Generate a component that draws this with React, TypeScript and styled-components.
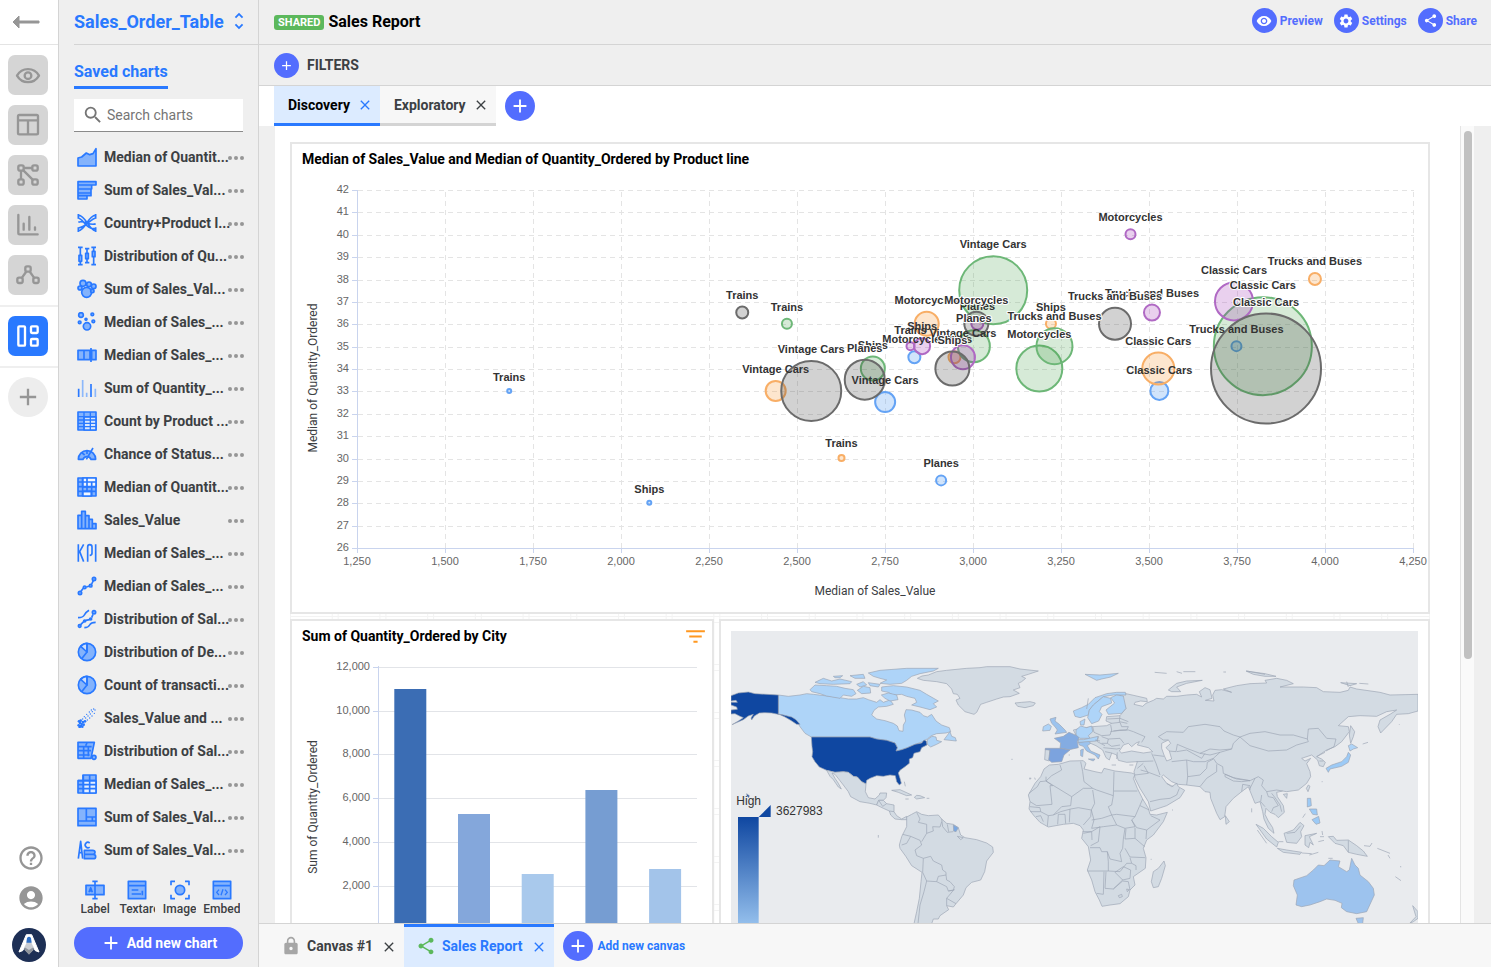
import React from "react";
import styled, { createGlobalStyle, css } from "styled-components";
import {
  MdAccountCircle,
  MdAdd,
  MdClose,
  MdFilterList,
  MdHelpOutline,
  MdLock,
  MdSearch,
  MdSettings,
  MdShare,
  MdUnfoldMore,
  MdVisibility,
} from "react-icons/md";

const BLUE = "#2979ff";
const INDIGO = "#536dfe";
const LINE = "#d4d4d4";
const PANEL = "#efefef";
const CHART_FONT = '"Liberation Sans", Arial, sans-serif';
const UI_FONT = 'Roboto, "Liberation Sans", sans-serif';

const GlobalStyle = createGlobalStyle`
  *, *::before, *::after { box-sizing: border-box; }
  body { margin: 0; font-family: ${UI_FONT}; color: #3c4043; background: #fff; }
  button, input { font-family: inherit; }
  button { border: 0; padding: 0; background: none; color: inherit; cursor: pointer; }
  ul { list-style: none; margin: 0; padding: 0; }
  h1, h2 { margin: 0; }
  svg { display: block; flex: none; }
`;

/* ---------- Layout ---------- */

const Shell = styled.div`
  display: flex;
  height: 100vh;
  overflow: hidden;
`;

const Rail = styled.nav`
  flex: none;
  width: 59px;
  border-right: 1px solid ${LINE};
  display: flex;
  flex-direction: column;
  background: #fff;
`;

const BackButton = styled.button`
  height: 45px;
  border-bottom: 1px solid #e4e4e4;
  padding-left: 12px;
`;

const RailGroup = styled.div<{ $lined?: boolean }>`
  display: flex;
  flex-direction: column;
  gap: 10px;
  padding: 10px 0 10px 8px;
  ${(p) =>
    p.$lined &&
    css`
      padding: 9px 0 10px 8px;
      border-top: 2px solid ${PANEL};
      border-bottom: 2px solid ${PANEL};
    `}
`;

const RailButton = styled.button<{ $active?: boolean }>`
  width: 40px;
  height: 40px;
  border-radius: 7px;
  background: ${(p) => (p.$active ? BLUE : "#d5d5d5")};
  color: ${(p) => (p.$active ? "#fff" : "#969696")};
`;

const RailAdd = styled.button`
  display: grid;
  place-items: center;
  width: 40px;
  height: 40px;
  margin: 9px 0 0 8px;
  border-radius: 50%;
  background: #ededed;
  color: #969696;
`;

const RailFooter = styled.div`
  margin-top: auto;
  padding: 0 0 5px 12px;
  color: #969696;
`;

const RailLinks = styled.div`
  display: flex;
  flex-direction: column;
  gap: 12px;
  padding: 0 0 16px 5px;
`;

const Sidebar = styled.aside`
  flex: none;
  width: 200px;
  border-right: 1px solid ${LINE};
  background: ${PANEL};
  display: flex;
  flex-direction: column;
  padding-left: 15px;
`;

const TablePicker = styled.button`
  flex: none;
  height: 45px;
  border-bottom: 1px solid ${LINE};
  display: flex;
  align-items: center;
  justify-content: space-between;
  padding: 0 8px 2px 0;
  color: ${BLUE};
  font-size: 18px;
  font-weight: 700;
`;

const SidebarTab = styled.h2`
  flex: none;
  align-self: flex-start;
  height: 44px;
  padding-top: 16px;
  border-bottom: 3px solid ${BLUE};
  color: ${BLUE};
  font-size: 16px;
  line-height: 22px;
  font-weight: 700;
`;

const SearchBox = styled.label`
  flex: none;
  display: flex;
  align-items: center;
  gap: 3px;
  height: 33px;
  margin: 10px 15px 8px 0;
  padding-left: 8px;
  background: #fff;
  border-bottom: 1px solid #8a8a8a;
  color: #757575;
  input {
    border: 0;
    outline: 0;
    width: 120px;
    padding: 0;
    background: none;
    font-size: 14px;
    color: #3c4043;
  }
  input::placeholder {
    color: #757575;
    opacity: 1;
  }
`;

const ChartRow = styled.li`
  display: flex;
  align-items: center;
  height: 33px;
  padding: 0 14px 0 3px;
`;

const ChartLink = styled.button`
  display: flex;
  align-items: center;
  gap: 7px;
  flex: 1;
  min-width: 0;
  white-space: nowrap;
  font-size: 14px;
  line-height: 20px;
  font-weight: 700;
  text-align: left;
`;

const MoreButton = styled.button`
  flex: none;
  color: #969696;
`;

const SidebarFooter = styled.div`
  margin-top: auto;
  padding: 0 15px 8px 0;
`;

const ToolGrid = styled.div`
  display: grid;
  grid-template-columns: repeat(4, 1fr);
  justify-items: center;
  margin-bottom: 10px;
`;

const ToolButton = styled.button`
  display: flex;
  flex-direction: column;
  align-items: center;
  gap: 1px;
  font-size: 12px;
  line-height: 16px;
  font-weight: 500;
`;

const ToolLabel = styled.span<{ $clip?: boolean }>`
  overflow: hidden;
  ${(p) => p.$clip && "width: 36px; text-align: left;"}
`;

const AddChart = styled.button`
  display: flex;
  align-items: center;
  justify-content: center;
  gap: 5px;
  width: 100%;
  height: 32px;
  border-radius: 16px;
  background: ${INDIGO};
  color: #fff;
  font-size: 14px;
  font-weight: 700;
`;

const Main = styled.main`
  flex: 1;
  min-width: 0;
  display: flex;
  flex-direction: column;
`;

const Bar = styled.header<{ $height: number }>`
  flex: none;
  display: flex;
  align-items: center;
  height: ${(p) => p.$height}px;
  padding: 0 14px 0 15px;
  background: ${PANEL};
  border-bottom: 1px solid ${LINE};
`;

const Badge = styled.span`
  height: 15px;
  padding: 0 4px;
  margin-right: 4px;
  border-radius: 3px;
  background: #5cb85c;
  color: #fff;
  font-size: 11px;
  line-height: 15px;
  font-weight: 700;
`;

const ReportTitle = styled.h1`
  font-size: 16px;
  line-height: 20px;
  font-weight: 700;
  color: #000;
`;

const Actions = styled.div`
  margin-left: auto;
  display: flex;
  gap: 11px;
  padding-bottom: 3px;
`;

const ActionButton = styled.button`
  display: flex;
  align-items: center;
  gap: 3px;
  color: ${INDIGO};
  font-size: 12px;
  font-weight: 700;
`;

const Disc = styled.span<{ $size: number }>`
  display: grid;
  place-items: center;
  flex: none;
  width: ${(p) => p.$size}px;
  height: ${(p) => p.$size}px;
  border-radius: 50%;
  background: ${INDIGO};
  color: #fff;
`;

const FilterButton = styled.button`
  display: flex;
  align-items: center;
  gap: 8px;
  font-size: 14px;
  font-weight: 700;
`;

const TabStrip = styled.div`
  flex: none;
  display: flex;
  height: 40px;
  padding-left: 15px;
`;

const SubTab = styled.div<{ $active?: boolean }>`
  display: flex;
  align-items: center;
  gap: 7px;
  padding: 1px 7px 0 14px;
  background: ${(p) => (p.$active ? "#dcebff" : "#f7f7f7")};
  border-bottom: 3px solid ${(p) => (p.$active ? BLUE : LINE)};
  color: ${(p) => (p.$active ? "#000" : "#3c4043")};
  button:last-child {
    color: ${(p) => (p.$active ? BLUE : "#3c4043")};
  }
`;

const TabButton = styled.button`
  font-size: 14px;
  font-weight: 700;
`;

const AddTab = styled.button`
  margin: 5px 0 0 9px;
  align-self: flex-start;
`;

const Viewport = styled.div`
  flex: 1;
  min-height: 0;
  overflow: hidden;
  display: flex;
  background: ${PANEL};
  padding: 0 17px 0 16px;
`;

const Page = styled.div`
  flex: 1;
  min-width: 0;
  padding: 16px 30px 0 15px;
  background: #fff;
  overflow: hidden;
`;

const Track = styled.div`
  flex: none;
  width: 14px;
  padding: 5px 2px 0 3px;
  background: #fafafa;
  border-left: 1px solid #e4e4e4;
`;

const Thumb = styled.div`
  height: 528px;
  border-radius: 4px;
  background: #c1c1c1;
`;

const Grid = styled.div`
  --cell: calc((100% + 5px) / 24);
  display: grid;
  grid-template-columns: 424fr 711fr;
  gap: 5px;
  background-image: linear-gradient(to right, #f3f3f3 0 1px, transparent 1px 42px, #f3f3f3 42px 43px, transparent 43px),
    linear-gradient(to bottom, #f3f3f3 0 1px, transparent 1px 42px, #f3f3f3 42px 43px, transparent 43px);
  background-size: var(--cell) 48px, 48px 48px;
`;

const Card = styled.section<{ $wide?: boolean; $inset?: boolean }>`
  ${(p) => p.$wide && "grid-column: 1 / -1;"}
  ${(p) => p.$inset && "padding: 10px 10px 0;"}
  border: 2px solid #e6e6e6;
  background: #fff;
  overflow: hidden;
  > svg {
    width: 100%;
    height: auto;
  }
`;

const CardHead = styled.div`
  display: flex;
  align-items: center;
  justify-content: space-between;
  height: 30px;
  padding: 0 4px 0 10px;
  h2 {
    font-size: 14px;
    line-height: 20px;
    font-weight: 700;
    color: #000;
  }
  button {
    color: #ff9820;
  }
`;

const CanvasBar = styled.footer`
  flex: none;
  display: flex;
  height: 44px;
  padding-left: 10px;
  background: #f7f7f7;
  border-top: 1px solid ${LINE};
`;

const CanvasTab = styled.div<{ $active?: boolean }>`
  display: flex;
  align-items: center;
  gap: 6px;
  padding: 0 7px 2px 12px;
  border-top: 3px solid ${(p) => (p.$active ? BLUE : "transparent")};
  background: ${(p) => (p.$active ? "#dcebff" : "transparent")};
  color: ${(p) => (p.$active ? BLUE : "#3c4043")};
  button:last-child {
    padding: 2px 0 0 2px;
  }
`;

const AddCanvas = styled.button`
  display: flex;
  align-items: center;
  gap: 5px;
  margin-left: 9px;
  color: ${BLUE};
  font-size: 12px;
  font-weight: 700;
`;

/* ---------- Rail icons ---------- */

const RailSvg = styled.svg`
  width: 40px;
  height: 40px;
  fill: none;
  stroke: currentColor;
  stroke-width: 7;
  stroke-linecap: round;
  stroke-linejoin: round;
`;

const railIcons: { label: string; art: React.ReactNode }[] = [
  {
    label: "View",
    art: (
      <>
        <path d="M27 62C42 36 78 36 93 62C78 88 42 88 27 62Z" />
        <circle cx="60" cy="62" r="10" />
      </>
    ),
  },
  { label: "Table", art: <path d="M34 30H86Q90 30 90 34V84Q90 88 86 88H34Q30 88 30 84V34Q30 30 34 30ZM30 46H90M60 46V88" /> },
  {
    label: "Model",
    art: (
      <>
        <path d="M48 39H72M39 48V72M46 46L74 74" />
        {[[39, 39], [81, 39], [39, 81], [81, 81]].map(([x, y]) => (
          <rect key={`${x}-${y}`} x={x - 8} y={y - 8} width="16" height="16" rx="5" />
        ))}
      </>
    ),
  },
  { label: "Charts", art: <path d="M31 30V84Q31 88 35 88H89M47 56V74M64 36V74M81 67V74" /> },
  {
    label: "Relations",
    art: (
      <>
        <path d="M54 51L42 68M66 51L78 68" />
        {[[60, 42], [36, 76], [84, 76]].map(([x, y]) => (
          <rect key={x} x={x - 8} y={y - 8} width="16" height="16" rx="5" />
        ))}
      </>
    ),
  },
];

/* ---------- Saved chart icons ---------- */

const ChartSvg = styled.svg`
  width: 20px;
  height: 20px;
  fill: #84b3fc;
  stroke: ${BLUE};
  stroke-width: 5;
  stroke-linejoin: round;
  .line {
    fill: none;
  }
  .solid {
    fill: ${BLUE};
    stroke: none;
  }
  .thin {
    stroke-width: 4;
  }
`;

const art: Record<string, React.ReactNode> = {
  area: <path d="M3 57V33L14 30L28 18L38 23L48 20L57 5V57Z" />,
  hbars: <path d="M3 5H57V15H3ZM3 15H44V27H3ZM3 27H42V39H3ZM3 39H42V47H3ZM3 47H30V57H3Z" />,
  sankey: <path className="line" d="M4 3V17M4 43V57M56 3V17M56 43V57M4 6C28 9 34 50 56 54M4 15C20 18 28 52 56 46M4 54C26 50 32 9 56 6M4 45C28 42 40 18 56 15M4 28C18 20 40 40 56 32" />,
  boxplot: (
    <>
      <path className="line" d="M3 4H17M10 4V56M3 56H17M24 8H37M30 8V50M24 50H37M43 4H57M50 4V56M43 56H57" />
      <path d="M6 28H14V46H6ZM26 22H34V38H26ZM46 16H54V32H46Z" />
    </>
  ),
  cluster: (
    <>
      <circle cx="18" cy="13" r="9" />
      <circle cx="36" cy="16" r="7" />
      <circle cx="50" cy="22" r="7" />
      <circle cx="9" cy="27" r="6" />
      <circle cx="29" cy="40" r="15" />
      <circle cx="46" cy="36" r="5" />
    </>
  ),
  bubbles: (
    <>
      <circle cx="12" cy="9" r="7" />
      <circle cx="46" cy="7" r="4" />
      <circle cx="27" cy="22" r="3" />
      <circle cx="8" cy="31" r="4" />
      <circle cx="49" cy="28" r="4" />
      <circle cx="30" cy="43" r="11" />
    </>
  ),
  hbox: <path d="M3 16H21V44H3ZM21 16H39V44H21ZM44 16H57V44H44ZM42 9V51" />,
  bars: (
    <>
      <path d="M5 32V57M42 18V57" />
      <path d="M17 6V57M29 44V57M55 32V57" stroke="#8cb8fb" />
    </>
  ),
  table: (
    <>
      <path d="M3 3H57V57H3Z" />
      <path d="M21 18H57V57H21Z" fill="#d8e7fd" />
      <path className="line thin" d="M3 17H57M3 27H57M3 37H57M3 47H57M21 3V57M40 3V57" />
    </>
  ),
  gauge: (
    <>
      <path d="M4 46A26 26 0 0 1 56 46H42A13 13 0 0 0 18 46Z" />
      <path className="line" d="M28 46L48 12M14 26L23 33M30 19V30" />
    </>
  ),
  pivot: (
    <>
      <path d="M3 3H57V57H3Z" />
      <path d="M17 3H57V30H17ZM17 43H43V57H17Z" fill="#f2f7ff" />
      <path className="line" d="M3 15H57M3 29H57M3 43H57M17 3V57M30 3V43M44 15V57" />
    </>
  ),
  histogram: <path d="M3 16H14V56H3ZM14 4H25V56H14ZM25 17H36V56H25ZM36 28H46V56H36ZM46 41H57V56H46Z" />,
  kpi: <path className="line" d="M4 4V56M20 4L8 26L20 56M32 56V12Q32 5 38 5Q45 5 45 12V30Q45 37 38 37M56 4V56" />,
  line: (
    <>
      <path className="line" d="M12 46L20 35M28 33L38 30M44 24L49 14" />
      <circle cx="9" cy="51" r="5" />
      <circle cx="23" cy="34" r="4" />
      <circle cx="41" cy="29" r="4" />
      <circle cx="51" cy="9" r="5" />
    </>
  ),
  multiline: (
    <>
      <path className="line" d="M11 47L20 38M26 34L38 32M44 26L48 16M3 26Q18 26 22 18T36 4M22 56Q34 56 38 48T56 40" />
      <circle cx="8" cy="51" r="4" />
      <circle cx="23" cy="36" r="3" />
      <circle cx="41" cy="30" r="3" />
      <circle cx="51" cy="10" r="5" />
    </>
  ),
  pie: (
    <>
      <circle cx="30" cy="30" r="26" />
      <path d="M30 30V4A26 26 0 0 0 11 13Z" fill="#cfe0fb" />
      <path className="line" d="M30 4V30L14 50" />
    </>
  ),
  scatter: (
    <>
      {[
        [5, 52], [9, 45], [12, 54], [6, 40], [14, 48], [18, 42], [11, 38], [20, 50], [17, 33], [24, 40], [26, 30],
        [22, 26], [31, 36], [33, 24], [29, 19], [38, 30], [40, 18], [37, 12], [45, 24], [46, 11], [43, 6], [52, 16],
        [54, 6], [50, 3], [8, 57], [16, 56],
      ].map(([x, y]) => (
        <circle key={`${x}-${y}`} className="solid" cx={x} cy={y} r={y > 37 ? 4 : 2} />
      ))}
    </>
  ),
  predict: (
    <>
      <path d="M3 4H52L42 52H3Z" />
      <path className="line" d="M3 17H44M3 29H42M3 42H38M20 17V52M34 17V46M26 14L30 6" />
      <circle cx="51" cy="49" r="6" />
    </>
  ),
  summary: (
    <>
      <path d="M18 3H57V57H3V20H18Z" />
      <path d="M19 20H57V57H19Z" fill="#e6f0ff" />
      <path className="line" d="M3 20H57M3 32H57M3 44H57M19 3V57M38 3V57" />
    </>
  ),
  treemap: <path d="M3 4H28V42H3ZM28 4H57V30H28ZM28 30H46V42H28ZM46 30H57V42H46ZM3 42H57V56H3Z" />,
  wordcloud: (
    <>
      <path className="line" d="M4 56L11 4L17 56M7 38H15M38 9A8 8 0 1 0 38 21" />
      <path d="M22 31H47Q54 31 54 37Q54 43 47 43H22ZM22 43H49Q56 43 56 50Q56 56 49 56H22Z" />
    </>
  ),
  label: (
    <>
      <path d="M3 16H57V44H3Z" />
      <path className="line" d="M30 4V56M22 4H38M22 56H38M12 37L17 23L22 37M14 33H20" />
    </>
  ),
  textarea: (
    <>
      <path d="M4 4H56V56H4ZM4 17H56" />
      <path className="line" d="M14 30H34M14 42H42M46 32V46" />
    </>
  ),
  image: (
    <>
      <path className="line" d="M3 16V4H15M45 4H57V16M57 44V56H45M15 56H3V44" />
      <circle cx="30" cy="30" r="14" />
    </>
  ),
  embed: (
    <>
      <path d="M4 4H56V56H4ZM4 17H56" />
      <path className="line thin" d="M21 29L14 37L21 45M39 29L46 37L39 45M33 28L27 46" />
    </>
  ),
};

const ChartIcon = ({ kind }: { kind: string }) => (
  <ChartSvg viewBox="0 0 60 60" aria-hidden="true">
    {art[kind]}
  </ChartSvg>
);

const savedCharts: [string, string][] = [
  ["area", "Median of Quantit..."],
  ["hbars", "Sum of Sales_Val..."],
  ["sankey", "Country+Product l..."],
  ["boxplot", "Distribution of Qu..."],
  ["cluster", "Sum of Sales_Val..."],
  ["bubbles", "Median of Sales_..."],
  ["hbox", "Median of Sales_..."],
  ["bars", "Sum of Quantity_..."],
  ["table", "Count by Product ..."],
  ["gauge", "Chance of Status..."],
  ["pivot", "Median of Quantit..."],
  ["histogram", "Sales_Value"],
  ["kpi", "Median of Sales_..."],
  ["line", "Median of Sales_..."],
  ["multiline", "Distribution of Sal..."],
  ["pie", "Distribution of De..."],
  ["pie", "Count of transacti..."],
  ["scatter", "Sales_Value and ..."],
  ["predict", "Distribution of Sal..."],
  ["summary", "Median of Sales_..."],
  ["treemap", "Sum of Sales_Val..."],
  ["wordcloud", "Sum of Sales_Val..."],
];

/* ---------- Bubble chart ---------- */

type Point = [label: string, x: number, y: number, r: number];

const T = "Trains";
const S = "Ships";
const P = "Planes";
const M = "Motorcycles";
const V = "Vintage Cars";
const C = "Classic Cars";
const B = "Trucks and Buses";

const series: { color: string; fill: string; halo: boolean; points: Point[] }[] = [
  {
    color: "#64a3f5",
    fill: "#2f86ee",
    halo: false,
    points: [[T, 1681, 33, 2], [S, 2079, 28, 2], [P, 2908, 29, 5], [V, 2749, 32.5, 10], [M, 2832, 34.5, 6], [C, 3528, 33, 9], [B, 3747, 35, 5]],
  },
  {
    color: "#f8ae66",
    fill: "#f78c1f",
    halo: false,
    points: [[T, 2625, 30, 3], [S, 3220, 36, 5], [P, 2946, 34.5, 6], [V, 2438, 33, 10], [M, 2867, 36, 12], [C, 3525, 34, 16], [B, 3970, 38, 6]],
  },
  {
    color: "#6db777",
    fill: "#43a047",
    halo: true,
    points: [[T, 2470, 36, 5], [S, 2714, 34, 12], [P, 3001, 35, 16], [V, 3056, 37.5, 34], [M, 3187, 34, 23], [C, 3822, 35, 49], [B, 3230, 35, 18]],
  },
  {
    color: "#b069c4",
    fill: "#9c27b0",
    halo: false,
    points: [[T, 2821, 35, 4], [S, 2854, 35, 8], [P, 3011, 36, 6], [V, 2970, 34.5, 12], [M, 3446, 40, 5], [C, 3740, 37, 19], [B, 3507, 36.5, 8]],
  },
  {
    color: "#6b6b6b",
    fill: "#333",
    halo: true,
    points: [[T, 2343, 36.5, 6], [S, 2940, 34, 17], [P, 2691, 33.5, 20], [V, 2539, 33, 30], [M, 3008, 36, 12], [C, 3831, 34, 55], [B, 3402, 36, 16]],
  },
];

const range = (from: number, to: number, step: number) =>
  Array.from({ length: Math.round((to - from) / step) + 1 }, (_, i) => from + i * step);

const AxisText = styled.text`
  font-family: ${CHART_FONT};
  font-size: 11px;
  fill: #666;
`;

const AxisName = styled.text`
  font-family: ${UI_FONT};
  font-size: 12px;
  fill: #3c4043;
  text-anchor: middle;
`;

const PointLabel = styled.text<{ $halo: boolean }>`
  font-family: ${CHART_FONT};
  font-size: 11px;
  font-weight: 700;
  fill: #333;
  text-anchor: middle;
  ${(p) => p.$halo && "paint-order: stroke; stroke: #fff; stroke-width: 2px;"}
`;

const BubbleChart = () => {
  const px = (v: number) => 65.5 + (v - 1250) * 0.352;
  const py = (v: number) => 374 - (v - 26) * 22.375;
  const snap = (v: number) => Math.round(v) + 0.5;
  return (
    <svg viewBox="0 0 1136 438" role="img" aria-label="Median of Sales_Value and Median of Quantity_Ordered by Product line">
      {range(27, 42, 1).map((v) => (
        <path key={v} d={`M66 ${snap(py(v))}H1122`} stroke="#e4e4e4" strokeDasharray="5 4" />
      ))}
      {range(1500, 4250, 250).map((v) => (
        <path key={v} d={`M${px(v)} 374V16`} stroke="#e4e4e4" strokeDasharray="5 4" />
      ))}
      <path d="M65.5 16V374.5H1122" fill="none" stroke="#c9d4ee" />
      {range(26, 42, 1).map((v) => (
        <React.Fragment key={v}>
          <path d={`M60 ${snap(py(v))}H66`} stroke="#c9d4ee" />
          <AxisText x="57" y={Math.round(py(v)) + 3} textAnchor="end">
            {v}
          </AxisText>
        </React.Fragment>
      ))}
      {range(1250, 4250, 250).map((v) => (
        <React.Fragment key={v}>
          <path d={`M${px(v)} 374V379`} stroke="#c9d4ee" />
          <AxisText x={px(v) - 0.5} y="391" textAnchor="middle">
            {v.toLocaleString("en-US")}
          </AxisText>
        </React.Fragment>
      ))}
      <AxisName x="583" y="421">
        Median of Sales_Value
      </AxisName>
      <AxisName transform="translate(25 204) rotate(-90)">Median of Quantity_Ordered</AxisName>
      {series.map((s) => (
        <g key={s.color} fill={s.fill} fillOpacity="0.22" stroke={s.color} strokeWidth="2">
          {s.points.map(([label, x, y, r]) => (
            <circle key={label} cx={px(x)} cy={py(y) - 0.5} r={r} />
          ))}
        </g>
      ))}
      {series.map((s) => (
        <g key={s.color}>
          {s.points.map(([label, x, y, r]) => (
            <PointLabel key={label} $halo={s.halo} x={px(x)} y={py(y) - r - 8.5}>
              {label}
            </PointLabel>
          ))}
        </g>
      ))}
    </svg>
  );
};

/* ---------- Bar chart ---------- */

const bars: [number, string][] = [
  [10975, "#3b6db4"],
  [5300, "#84a7db"],
  [2530, "#a9c9ec"],
  [6370, "#769dd2"],
  [2780, "#a3c4ea"],
];

const BarChart = () => {
  const py = (v: number) => Math.round(279 - (v * 43.9) / 2000);
  return (
    <svg viewBox="0 0 420 320" role="img" aria-label="Sum of Quantity_Ordered by City">
      {range(2000, 12000, 2000).map((v) => (
        <React.Fragment key={v}>
          <path d={`M87 ${py(v) + 0.5}H405`} stroke="#e2e4e8" />
          <path d={`M81 ${py(v) + 0.5}H87`} stroke="#c9d4ee" />
          <AxisText x="78" y={py(v) + 3} textAnchor="end">
            {v.toLocaleString("en-US")}
          </AxisText>
        </React.Fragment>
      ))}
      <path d="M86.5 15V320" stroke="#c9d4ee" />
      {bars.map(([v, color], i) => (
        <rect key={color} x={102.3 + i * 63.7} y={py(v)} width="32" height={320 - py(v)} fill={color} />
      ))}
      <AxisName transform="translate(25 156) rotate(-90)">Sum of Quantity_Ordered</AxisName>
    </svg>
  );
};

/* ---------- World map ---------- */

const land = "#d3dbe3";
const pale = "#aed4f8";

const west: [string, string][] = [
  [land, "592,190 606,183 625,180 650,170 680,166 740,160 780,158 800,155 870,155 900,162 955,168 925,178 905,184 917,190 905,200 895,205 900,218 880,225 898,235 870,245 850,246 830,252 800,262 782,268 770,292 762,298 735,290 715,270 708,255 720,250 712,238 700,236 695,222 680,206 650,200 610,196"],
  [land, "885,264 905,262 930,260 946,264 940,272 915,278 893,274"],
  [pale, "175,240 205,244 240,240 260,236 280,238 330,244 360,248 385,252 410,252 430,248 445,254 470,262 480,254 490,262 510,255 520,268 500,274 475,276 462,286 455,300 470,312 495,317 520,325 532,333 537,347 549,349 550,330 557,318 553,300 558,284 575,285 600,292 610,302 622,306 635,298 648,318 665,330 688,338 692,350 678,354 650,356 634,362 622,372 617,374 608,380 585,388 562,398 545,404 528,408 532,398 525,384 500,376 470,372 450,366 274,366 255,355 240,335 228,316 200,303 175,297"],
  [pale, "622,374 636,364 648,366 650,376 665,380 650,388 632,396 622,388"],
  [pale, "672,374 690,350 695,364 706,368 709,378 690,376"],
  [pale, "270,224 285,210 320,212 350,214 375,220 400,224 408,236 395,244 370,240 360,250 320,243 300,236 275,230"],
  [pale, "445,174 480,166 560,160 655,160 640,168 600,176 575,184 560,196 545,205 510,208 480,205 500,195 480,190 460,184"],
  [pale, "485,216 520,212 560,216 600,226 620,238 655,258 640,266 650,276 630,284 600,276 575,270 590,262 585,250 560,244 545,238 520,240 505,232 485,228"],
  [pale, "285,202 310,190 335,198 360,192 395,200 390,206 340,208 300,206"],
  [pale, "410,208 430,200 440,210 420,216"],
  [pale, "445,203 480,208 475,216 450,212"],
  [pale, "390,182 430,178 435,190 405,190"],
  [pale, "340,184 368,182 360,188 345,188"],
  [pale, "412,226 430,214 450,218 452,234 425,236"],
  [pale, "484,240 505,234 530,240 534,254 510,258 495,250"],
  ["#0f47a1", "33,242 55,234 85,231 105,236 175,240 175,297 190,300 215,306 228,314 240,328 230,328 212,316 195,306 180,299 155,294 135,293 118,294 103,303 95,315 93,309 100,298 85,303 70,314 45,325 36,329 55,318 70,308 60,304 45,296 33,297 33,285 52,283 50,276 33,270 33,262 52,262 48,256 33,258"],
  ["#0f47a1", "274,366 450,366 470,372 500,376 525,384 532,398 528,408 545,404 562,398 585,388 605,384 612,375 619,378 621,390 605,398 600,410 582,415 578,428 568,432 568,445 555,455 540,466 535,474 540,490 544,505 538,510 530,500 526,482 510,480 490,484 470,482 450,490 440,496 438,507 425,500 412,486 400,484 385,472 370,470 345,472 320,466 298,456 285,440 276,425 278,410 276,395"],
  ["#0f47a1", "80,536 88,542 86,548 81,542"],
  [land, "320,466 345,472 370,470 385,472 400,484 412,486 425,500 438,507 436,530 445,548 465,552 478,540 480,534 500,534 498,548 490,556 476,556 470,570 450,565 420,560 392,545 385,530 370,510 345,478 336,474 345,490 355,505 364,522 355,516 340,494 330,484"],
  [land, "470,570 476,556 490,556 500,566 522,570 522,590 530,602 545,612 560,604 562,614 545,614 525,612 512,600 508,588 490,580"],
  [land, "515,526 540,524 575,540 560,542 535,532"],
  [land, "583,547 590,541 600,542 614,548 590,552"],
  [land, "560,606 575,598 590,590 605,598 625,602 655,600 665,612 680,625 700,628 715,638 722,660 735,668 770,674 800,684 818,696 820,712 800,738 794,770 782,795 755,802 738,818 730,840 708,866 700,876 680,872 686,884 660,902 655,912 640,912 635,926 582,926 590,890 598,850 603,800 606,772 575,752 558,725 540,700 538,690 545,665 560,635"],
  ["#7ba8e2", "700,630 715,638 708,650 701,648"],
];

const westBorders =
  "M590 592L600 612 595 622 620 628 620 655 605 680M548 658L572 664 560 685 545 690M572 664L600 676 605 690 585 705 590 722 610 730 608 772M620 655L640 648 638 635 660 636 665 620M665 612L668 635 682 652 700 650M682 628L686 650M610 730L632 724 640 738 665 750 668 765 678 772 678 780 655 784 650 800 620 798 608 772M620 798L612 830 600 870 594 926M650 800L680 815 685 828 700 826 703 815 690 800 680 795 678 780M685 828L704 824M700 826L680 850 708 866M680 850L680 872M476 556L488 574 500 566M508 588L522 590M712 664L730 668 722 674ZM553 500L556 514M620 550H628M556 552H566M475 660V668M874 433H878M930 488V494";

const east: [string, string][] = [
  [land, "300,240 318,236 345,242 380,250 382,260 362,258 345,262 342,268 368,274 378,265 400,256 410,250 430,252 440,244 470,244 500,240 530,238 545,246 538,230 555,218 570,224 576,250 556,256 582,258 578,240 585,226 605,224 635,232 610,222 650,212 690,206 740,204 735,196 770,190 800,196 820,206 780,216 850,216 890,218 910,230 960,232 985,226 990,216 1010,222 1080,232 1110,240 1194,238 1194,288 1165,296 1130,298 1115,320 1082,354 1074,335 1080,315 1110,298 1130,285 1100,290 1070,304 1020,302 985,305 955,332 985,335 988,350 965,380 945,395 920,405 890,425 905,432 916,442 910,455 898,452 893,435 875,420 845,430 855,438 872,430 860,446 870,470 872,485 860,505 835,525 800,530 788,528 770,532 772,545 790,572 793,592 775,608 765,598 750,592 738,580 735,598 745,618 758,638 762,655 745,640 732,612 728,590 720,560 705,565 695,540 685,515 665,530 640,550 618,575 614,605 600,614 590,595 572,550 570,532 555,530 540,515 500,510 475,508 455,500 430,480 425,485 440,505 455,515 470,505 475,515 494,526 480,548 440,572 392,588 385,560 360,520 345,490 342,470 352,440 320,442 295,436 290,420 275,414 268,435 258,428 248,405 228,392 212,385 178,380 160,345 180,340 218,335 260,332 275,325 258,318 260,305 300,302 318,280"],
  [land, "88,450 115,448 150,438 190,437 198,445 192,462 225,470 245,474 252,460 285,468 335,474 345,478 340,490 352,520 368,552 385,580 390,598 410,600 442,592 430,620 400,660 380,675 370,700 378,728 376,760 340,785 345,810 330,825 325,845 300,866 270,870 246,874 238,855 225,830 215,795 202,765 212,735 205,695 185,670 190,645 180,632 160,625 130,628 85,636 60,622 40,600 27,582 30,560 25,540 45,505 62,485 72,462"],
  [land, "432,738 436,752 425,790 415,815 400,818 394,800 400,770 415,760"],
  [land, "445,225 470,205 500,198 547,196 500,205 470,216 482,230 455,230"],
  [land, "678,168 735,176 768,184 735,184 700,178"],
  [land, "962,203 1010,206 990,212"],
  [land, "992,332 1004,350 1000,365 992,385 988,360"],
  [land, "865,510 870,514 864,530 859,520"],
  [land, "790,538 802,536 800,550"],
  [land, "616,602 628,620 618,628"],
  [land, "708,628 730,640 755,665 775,682 770,696 740,672"],
  [land, "772,700 800,705 845,712 840,718 790,712"],
  [land, "792,655 820,645 840,622 852,632 842,650 845,665 830,685 800,682"],
  [land, "855,662 890,655 868,665 880,690 870,682 866,698 855,690"],
  [land, "925,665 940,664 950,676 985,675 1010,692 1030,708 1042,724 1010,718 985,712 970,692 945,685"],
  [land, "1178,872 1194,890 1194,910 1180,920 1168,926 1188,905"],
  [land, "76,402 90,405 88,438 74,434"],
  ["#84ace2", "147,352 178,365 172,380 175,398 148,404 120,400 122,384 103,370 130,364"],
  ["#7ca3de", "76,400 120,400 150,405 132,420 125,440 95,442 86,434 90,405 76,404"],
  ["#9cc3ee", "90,312 108,307 105,318 118,328 135,345 140,352 105,357 112,345 105,335 95,325"],
  [pale, "70,335 85,327 94,334 90,346 68,348"],
  [pale, "168,345 182,333 200,338 215,333 218,350 205,362 210,370 180,370 168,360"],
  [pale, "180,320 195,312 192,330 182,330"],
  [pale, "160,288 185,278 205,268 225,248 260,236 290,232 316,232 318,240 280,240 250,245 220,270 208,285 205,300 180,308 165,304"],
  [pale, "220,270 250,245 272,250 275,264 245,275 238,290 246,298 236,318 215,326 203,308 208,285"],
  [pale, "272,248 290,240 310,243 318,280 305,295 265,298 258,285 284,264"],
  ["#9cc3ee", "175,382 205,378 212,385 202,392 212,408 240,420 235,432 225,420 200,408 190,394 178,390"],
  [pale, "190,374 235,364 230,378 175,382 175,374"],
  ["#9cc3ee", "205,432 225,432 220,438"],
  ["#9cc3ee", "182,405 190,402 188,425 182,422"],
  [pale, "195,178 240,180 295,175 272,186 245,192 230,196"],
  [pale, "985,392 995,387 1013,398 1000,402 990,408"],
  ["#9ccaf6", "985,412 992,420 985,442 965,454 930,462 925,472 918,460 935,450 965,440 980,425"],
  ["#9ccaf6", "862,550 872,550 874,572 862,576"],
  ["#9ccaf6", "868,582 890,582 892,600 878,598"],
  ["#9ccaf6", "876,614 896,604 900,624 888,628"],
  ["#9dc3ee", "822,795 860,782 880,765 895,750 912,752 930,735 960,738 955,755 980,770 988,765 995,730 1005,750 1015,760 1020,780 1045,800 1060,820 1063,840 1040,890 1010,896 980,890 964,878 966,865 945,856 920,852 900,860 870,870 845,875 828,870 832,840 820,812"],
  ["#9dc3ee", "1008,910 1030,908 1028,926 1015,926"],
];

const eastBorders =
  "M120 450L125 465 95 482 78 498 60 500 52 515 27 535M78 485L78 498 98 512 90 512 96 568 50 572 30 560M78 498L155 545 190 520 218 520 192 500 188 470 182 440M155 545L152 572 125 575 100 600M218 520L230 525 280 542 282 470M282 528H352M218 525L224 565 214 585M280 542L275 570 265 575 275 600M152 582L175 578 214 585 212 605 190 630M150 582L148 622M100 600L122 590 152 582M115 598H135M115 598L113 628M135 598L137 626M100 600L85 602 82 634M30 575L60 578 62 590 30 590M62 590L85 602M48 605L62 602 70 620M275 600L290 598 345 605 358 575 368 552M215 615L245 610 275 600M214 585L222 615 215 640 250 635 290 630 275 600M290 630L315 640 345 635 335 615 345 605M360 572L388 585M335 615L350 638 380 645 420 615 392 602M345 638L345 670 374 695M380 645L378 672M318 642L315 672 345 670M188 650H215L240 635 235 680 212 692M210 698H240L245 710 262 710 270 732 305 740 300 715 308 700 310 672 315 640M315 700L330 726 376 728M262 710L265 740 265 768 202 768M265 768L300 770 320 745 335 745 330 728M285 772L310 755 332 765 330 790 308 795ZM258 770L255 820 280 822 308 795M252 770L250 838 230 835M280 822L308 798 325 800 330 825M335 745L348 752 348 765M295 842L305 838 307 845 298 848ZM320 822L328 824 322 830ZM190 655L215 650 216 675" +
  "M415 365L440 350 490 352 505 335 555 328 600 335 612 348 640 360 660 366 640 385 635 402 600 405 570 402 540 415 500 400 472 388 468 410 445 408M415 365L430 375 445 375M660 366L690 355 735 350 780 360 820 360 862 372 865 342 895 340 920 370 948 372 942 395 918 408M660 366L690 392 745 408 800 405 830 390 865 380 862 372M635 402L600 412 580 430 590 445 608 455 610 475 640 488 690 497 715 485 730 495 725 512 740 530 770 525 788 528M470 410L500 405 545 430 555 415M540 415L570 420 600 412M500 435L520 440 555 440 580 430M455 440L500 435 503 485 500 510M503 485L540 480 560 460 562 442 580 432M540 515L560 490 590 470 590 448M615 478L650 492 690 497 665 500 640 498 615 485ZM665 530L668 508 690 512 690 525M690 520L705 490M725 540L722 560 735 575M740 530L745 545 760 548 775 572 760 578 755 590M755 535L765 548 780 570 785 590M395 415L408 445 420 480M350 440L400 438M345 480L385 475 372 452M362 465L380 470 420 485M390 560L420 553 450 550 470 540 478 520M440 505L460 515M400 420L432 424M370 445L352 460M290 432L292 412M218 335L222 352 245 362 270 360 275 345 272 330M275 325L300 322 305 335 325 335 320 345 280 348M325 320L300 310 262 312M300 302L298 320 322 325M272 350L300 345 325 345 340 350 375 365 365 382M245 365L265 372 300 370 312 385M265 372L262 385 275 394 300 390M245 385L262 385M250 398L290 402 300 400M235 365L232 380 255 392M255 410L275 414M890 425L915 412M898 438H910M985 676V712M800 655L825 652 842 632M205 250L200 282M225 375L240 378M404 172L440 175M470 170L486 175M490 170L526 170M610 171H618M680 168L735 178M1018 205L1045 207M980 200L985 216M1028 387L1044 382M1138 328V330M695 580V592M848 608L856 596M906 648L908 660M895 680L912 676M900 665H912M868 720L895 712M846 714L875 716M1032 692L1050 694 1056 684M1072 700L1110 715M1104 720L1110 730M1142 753V757M1126 785L1143 797M712 645L740 685M905 500H908M392 733H395M456 585H459M28 490H34M44 488L46 494M146 420H150M275 450H288M328 450H340M775 680H790M925 730H938";

const Land = styled.g`
  stroke: #9ca5b4;
  stroke-width: 2;
  stroke-linejoin: round;
`;

const LegendText = styled.text`
  font-family: ${CHART_FONT};
  font-size: 36px;
  fill: #333;
`;

const WorldMap = () => (
  <svg viewBox="33 48 2061 960" role="img" aria-label="World map">
    <defs>
      <linearGradient id="scale" x1="0" y1="0" x2="0" y2="1">
        <stop offset="0" stopColor="#0f47a1" />
        <stop offset="0.8" stopColor="#94bfec" />
        <stop offset="1" stopColor="#aed4f8" />
      </linearGradient>
    </defs>
    <rect x="33" y="48" width="2061" height="960" fill="#e9ebee" />
    <Land>
      {west.map(([fill, points]) => (
        <polygon key={points} points={points} fill={fill} />
      ))}
      <path d={westBorders} fill="none" />
    </Land>
    <Land transform="translate(900 0)">
      {east.map(([fill, points]) => (
        <polygon key={points} points={points} fill={fill} />
      ))}
      <path d={eastBorders} fill="none" />
      <g fill="#e9ebee">
        <path d="M298 408L310 390 325 385 335 395 348 384 358 380 352 390 385 398 398 410 370 414 335 408 305 414Z" />
        <path d="M425 385L445 375 452 385 438 398 448 408 455 432 440 438 432 420 425 400Z" />
      </g>
    </Land>
    <LegendText x="49" y="569">High</LegendText>
    <rect x="54" y="606" width="62" height="402" fill="url(#scale)" />
    <path d="M116 606L152 570V606Z" fill="#0f47a1" />
    <LegendText x="168" y="600">3627983</LegendText>
  </svg>
);

/* ---------- App ---------- */

const Dots = () => (
  <svg width="16" height="6" viewBox="0 0 16 6" fill="currentColor" aria-hidden="true">
    <circle cx="2" cy="4" r="2" />
    <circle cx="8" cy="4" r="2" />
    <circle cx="14" cy="4" r="2" />
  </svg>
);

const Logo = () => (
  <svg width="34" height="34" viewBox="0 0 102 102" aria-hidden="true">
    <circle cx="51" cy="51" r="51" fill="#1d2f55" />
    <path d="M43 20H59L81 72L70 68L51 34L32 68L21 72Z" fill="#fff" stroke="#fff" strokeWidth="3" strokeLinejoin="round" />
    <path d="M51 30L64 56V66L51 78L38 66V56Z" fill="#c9ccd2" />
    <path d="M45 30Q51 22 57 30L59 44H43Z" fill="#2f6fc4" />
    <path d="M38 58L51 66L64 58V66L51 80L38 66Z" fill="#8f949c" />
  </svg>
);

export default function App() {
  return (
    <>
      <GlobalStyle />
      <Shell>
        <Rail aria-label="Workspace">
          <BackButton aria-label="Back">
            <svg width="28" height="14" viewBox="0 0 28 14" fill="#969696">
              <path d="M1 7L7 1V6H27V8H7V13Z" stroke="#969696" />
            </svg>
          </BackButton>
          <RailGroup>
            {railIcons.map((icon) => (
              <RailButton key={icon.label} aria-label={icon.label}>
                <RailSvg viewBox="0 0 120 120">{icon.art}</RailSvg>
              </RailButton>
            ))}
          </RailGroup>
          <RailGroup $lined>
            <RailButton $active aria-label="Canvas">
              <RailSvg viewBox="0 0 120 120">
                <rect x="31" y="31" width="20" height="58" rx="3" />
                <rect x="69" y="31" width="20" height="20" rx="3" />
                <rect x="69" y="69" width="20" height="20" rx="3" />
              </RailSvg>
            </RailButton>
          </RailGroup>
          <RailAdd aria-label="Add">
            <MdAdd size={28} />
          </RailAdd>
          <RailFooter>
            <RailLinks>
              <button aria-label="Help">
                <MdHelpOutline size={28} />
              </button>
              <button aria-label="Account">
                <MdAccountCircle size={28} />
              </button>
            </RailLinks>
            <Logo />
          </RailFooter>
        </Rail>

        <Sidebar>
          <TablePicker>
            Sales_Order_Table
            <MdUnfoldMore size={22} />
          </TablePicker>
          <SidebarTab>Saved charts</SidebarTab>
          <SearchBox>
            <MdSearch size={22} />
            <input type="text" placeholder="Search charts" aria-label="Search charts" />
          </SearchBox>
          <ul>
            {savedCharts.map(([kind, name], i) => (
              <ChartRow key={i}>
                <ChartLink>
                  <ChartIcon kind={kind} />
                  {name}
                </ChartLink>
                <MoreButton aria-label={`Options for chart ${i + 1}`}>
                  <Dots />
                </MoreButton>
              </ChartRow>
            ))}
          </ul>
          <SidebarFooter>
            <ToolGrid>
              <ToolButton>
                <ChartIcon kind="label" />
                <ToolLabel>Label</ToolLabel>
              </ToolButton>
              <ToolButton>
                <ChartIcon kind="textarea" />
                <ToolLabel $clip>Textarea</ToolLabel>
              </ToolButton>
              <ToolButton>
                <ChartIcon kind="image" />
                <ToolLabel>Image</ToolLabel>
              </ToolButton>
              <ToolButton>
                <ChartIcon kind="embed" />
                <ToolLabel>Embed</ToolLabel>
              </ToolButton>
            </ToolGrid>
            <AddChart>
              <MdAdd size={22} />
              Add new chart
            </AddChart>
          </SidebarFooter>
        </Sidebar>

        <Main>
          <Bar $height={45}>
            <Badge>SHARED</Badge>
            <ReportTitle>Sales Report</ReportTitle>
            <Actions>
              <ActionButton>
                <Disc $size={25}>
                  <MdVisibility size={16} />
                </Disc>
                Preview
              </ActionButton>
              <ActionButton>
                <Disc $size={25}>
                  <MdSettings size={16} />
                </Disc>
                Settings
              </ActionButton>
              <ActionButton>
                <Disc $size={25}>
                  <MdShare size={15} />
                </Disc>
                Share
              </ActionButton>
            </Actions>
          </Bar>
          <Bar as="div" $height={41}>
            <FilterButton>
              <Disc $size={25}>
                <MdAdd size={15} />
              </Disc>
              FILTERS
            </FilterButton>
          </Bar>
          <TabStrip>
            <SubTab $active>
              <TabButton>Discovery</TabButton>
              <button aria-label="Close Discovery">
                <MdClose size={16} />
              </button>
            </SubTab>
            <SubTab>
              <TabButton>Exploratory</TabButton>
              <button aria-label="Close Exploratory">
                <MdClose size={16} />
              </button>
            </SubTab>
            <AddTab aria-label="Add tab">
              <Disc $size={30}>
                <MdAdd size={22} />
              </Disc>
            </AddTab>
          </TabStrip>
          <Viewport>
            <Page>
              <Grid>
                <Card $wide>
                  <CardHead>
                    <h2>Median of Sales_Value and Median of Quantity_Ordered by Product line</h2>
                  </CardHead>
                  <BubbleChart />
                </Card>
                <Card>
                  <CardHead>
                    <h2>Sum of Quantity_Ordered by City</h2>
                    <button aria-label="Filter">
                      <MdFilterList size={25} />
                    </button>
                  </CardHead>
                  <BarChart />
                </Card>
                <Card $inset>
                  <WorldMap />
                </Card>
              </Grid>
            </Page>
            <Track>
              <Thumb />
            </Track>
          </Viewport>
          <CanvasBar>
            <CanvasTab>
              <MdLock size={20} color="#a6a6a6" />
              <TabButton>Canvas #1</TabButton>
              <button aria-label="Close Canvas #1">
                <MdClose size={16} />
              </button>
            </CanvasTab>
            <CanvasTab $active>
              <MdShare size={20} color="#5cb85c" />
              <TabButton>Sales Report</TabButton>
              <button aria-label="Close Sales Report">
                <MdClose size={16} />
              </button>
            </CanvasTab>
            <AddCanvas>
              <Disc $size={30}>
                <MdAdd size={22} />
              </Disc>
              Add new canvas
            </AddCanvas>
          </CanvasBar>
        </Main>
      </Shell>
    </>
  );
}
